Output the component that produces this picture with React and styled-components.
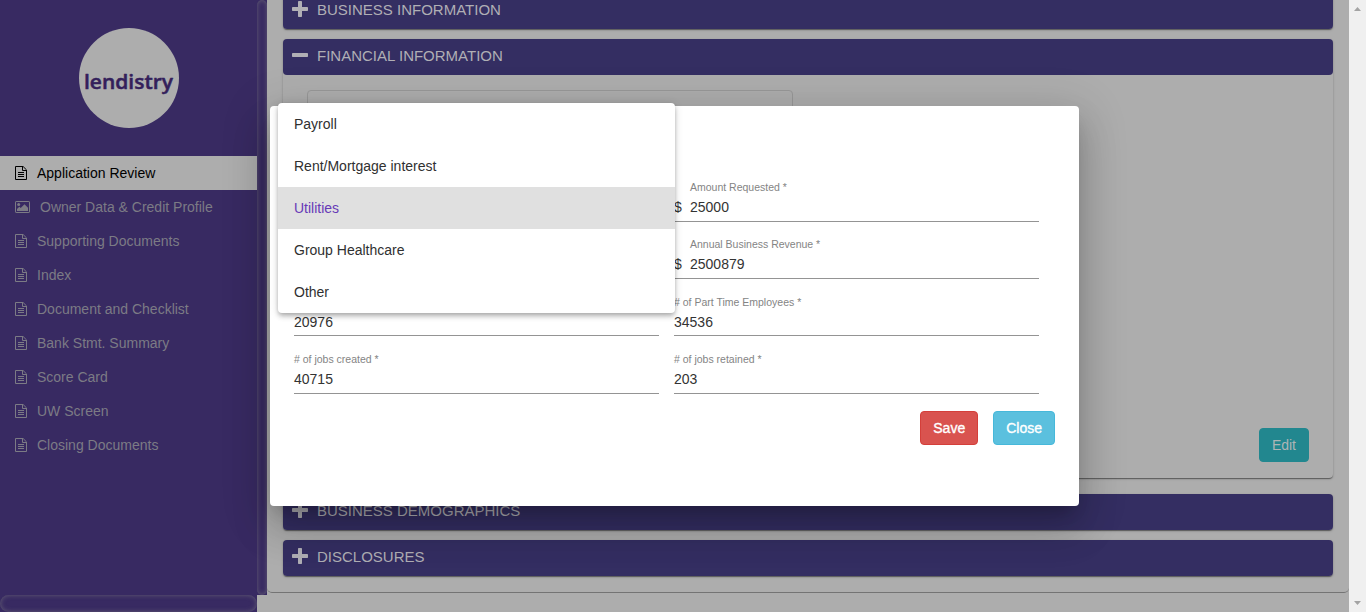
import React from "react";
import styled, { createGlobalStyle, css } from "styled-components";

const GlobalStyle = createGlobalStyle`
  * { box-sizing: border-box; }
  html, body { margin: 0; padding: 0; overflow: hidden; }
  body {
    font-family: "Liberation Sans", Arial, sans-serif;
    font-size: 14px;
    background: #adadad;
  }
`;

const Page = styled.div`
  position: relative;
  display: flex;
  width: 1366px;
  height: 612px;
  overflow: hidden;
`;

const SidebarArea = styled.aside`
  display: grid;
  grid-template-columns: 257px 10px;
  grid-template-rows: 595px 17px;
  width: 267px;
  flex: none;
`;

const Sidebar = styled.div`
  background: #382a62;
  display: flex;
  flex-direction: column;
  align-items: center;
  padding-top: 28px;
`;

const ScrollTrack = styled.div`
  background: #382a62;
  & > div {
    width: 100%;
    height: 100%;
    border-radius: 10px;
    box-shadow: inset 0 0 5px rgba(128, 128, 128, 0.6);
  }
`;

const Logo = styled.div`
  width: 100px;
  height: 100px;
  flex: none;
  border-radius: 50%;
  background: #adadad;
  margin-bottom: 28px;

  text {
    font-family: "Open Sans", Lato, sans-serif;
    font-size: 20px;
    font-weight: 600;
    fill: #341f5b;
    stroke: #341f5b;
    stroke-width: 0.5px;
    stroke-linejoin: round;
  }
`;

const Nav = styled.nav`
  width: 100%;
  display: flex;
  flex-direction: column;
`;

const NavItem = styled.a`
  height: 34px;
  display: flex;
  align-items: center;
  gap: 10px;
  padding-left: 15px;
  color: ${(p) => (p.$active ? "#000" : "#7c7b85")};
  background: ${(p) => (p.$active ? "#adadad" : "transparent")};
  svg { flex: none; display: block; }
`;

const Content = styled.main`
  flex: none;
  width: 1082px;
  height: 593px;
  display: flex;
  flex-direction: column;
  padding: 0 16px;
  overflow: hidden;
  border-bottom: 1px solid #747474;
  border-radius: 0 0 5px 5px;
`;

const Panel = styled.section`
  flex: none;
  height: ${(p) => p.$height || 36}px;
  margin: ${(p) => p.$margin || "0 0 10px"};
  border-radius: 4px;
  box-shadow: 0 2px 1px -1px rgba(0, 0, 0, 0.2), 0 1px 1px rgba(0, 0, 0, 0.25), 0 1px 3px rgba(0, 0, 0, 0.16);
`;

const PanelHeader = styled.header`
  height: 36px;
  border-radius: 4px;
  background: #342e62;
  color: #b0afb5;
  display: flex;
  align-items: center;
  gap: 9px;
  padding: 0 9px 4px;
  font-size: 15px;
  svg { flex: none; }
`;

const PanelBody = styled.div`
  height: 403px;
  padding: 15px 24px 16px;
  display: flex;
  flex-direction: column;
  justify-content: space-between;
`;

const Outline = styled.div`
  width: 486px;
  height: 60px;
  border: 1px solid #989898;
  border-radius: 4px;
`;

const Button = styled.button`
  height: 34px;
  padding: 0 12px;
  border: 1px solid ${(p) => p.$border};
  border-radius: 4px;
  background: ${(p) => p.$bg};
  color: ${(p) => p.$color || "#fff"};
  font: 14px "Liberation Sans", Arial, sans-serif;
  ${(p) =>
    p.$strong &&
    css`
      -webkit-text-stroke: 0.35px #fff;
    `}
  &:last-child { align-self: flex-end; }
`;

const PageScrollbar = styled.div`
  width: 17px;
  flex: none;
  background: #f0f0f0;
  display: flex;
  flex-direction: column;
  justify-content: space-between;
  align-items: center;
  padding: 7px 0 7px;
  svg { display: block; }
`;

const Dialog = styled.div`
  position: absolute;
  left: 270px;
  top: 106px;
  width: 809px;
  height: 400px;
  padding: 67px 24px 0;
  border-radius: 4px;
  background: #fff;
  box-shadow: 0 11px 15px -7px rgba(0, 0, 0, 0.2), 0 24px 38px 3px rgba(0, 0, 0, 0.14),
    0 9px 46px 8px rgba(0, 0, 0, 0.12);
`;

const FieldGrid = styled.div`
  display: grid;
  grid-template-columns: 365px 365px;
  grid-auto-rows: 57.33px;
  column-gap: 15px;
`;

const Field = styled.div`
  height: ${(p) => (p.$short ? 48 : 49)}px;
  display: flex;
  align-items: flex-end;
  border-bottom: 1px solid #949494;
`;

const Prefix = styled.span`
  width: 16px;
  line-height: 16px;
  padding-bottom: 6px;
  color: #333;
`;

const FieldText = styled.div`
  display: flex;
  flex-direction: column;
  height: 100%;
  padding-top: 8px;
  color: #333;
`;

const Label = styled.label`
  font-size: 10.5px;
  line-height: 12px;
  color: #848484;
`;

const Value = styled.span`
  margin-top: 6px;
  line-height: 16px;
`;

const Actions = styled.div`
  display: flex;
  justify-content: flex-end;
  gap: 15px;
  margin-top: 9px;
`;

const Menu = styled.ul`
  position: absolute;
  left: 278px;
  top: 103px;
  width: 397px;
  margin: 0;
  padding: 0;
  list-style: none;
  border-radius: 4px;
  overflow: hidden;
  background: #fff;
  box-shadow: 0 2px 4px -1px rgba(0, 0, 0, 0.2), 0 4px 5px rgba(0, 0, 0, 0.14),
    0 1px 10px rgba(0, 0, 0, 0.12);
`;

const MenuItem = styled.li`
  height: 42px;
  line-height: 42px;
  padding: 0 16px;
  color: ${(p) => (p.$selected ? "#673ab7" : "#303030")};
  background: ${(p) => (p.$selected ? "#e0e0e0" : "transparent")};
`;

const FileIcon = () => (
  <svg width="12" height="14" viewBox="0 0 12 14" fill="none" stroke="currentColor">
    <path d="M.5 .5h7.6l3.4 3.4v9.6h-11z" />
    <path d="M7.5 .5v4h4M3 6.5h6M3 8.5h6M3 10.5h6" />
  </svg>
);

const ImageIcon = () => (
  <svg width="15" height="12" viewBox="0 0 15 12">
    <rect x=".5" y=".5" width="14" height="11" rx=".6" fill="none" stroke="currentColor" />
    <circle cx="3.7" cy="3.6" r="1.5" fill="currentColor" />
    <path d="M2 10V8l2.3-2.3 1.4 1.4L9.5 3.3 13 6.8V10z" fill="currentColor" />
  </svg>
);

const ToggleIcon = ({ open }) => (
  <svg width="16" height="16" viewBox="0 0 16 16" fill="currentColor">
    <rect x="0" y="6" width="16" height="4" rx=".7" />
    {!open && <rect x="6" y="0" width="4" height="16" rx=".7" />}
  </svg>
);

const NAV = [
  "Application Review",
  "Owner Data & Credit Profile",
  "Supporting Documents",
  "Index",
  "Document and Checklist",
  "Bank Stmt. Summary",
  "Score Card",
  "UW Screen",
  "Closing Documents",
];

const FIELDS = [
  {},
  { label: "Amount Requested *", value: "25000", prefix: "$" },
  {},
  { label: "Annual Business Revenue *", value: "2500879", prefix: "$" },
  { label: "\u00a0", value: "20976", short: true },
  { label: "# of Part Time Employees *", value: "34536", short: true },
  { label: "# of jobs created *", value: "40715" },
  { label: "# of jobs retained *", value: "203" },
];

const OPTIONS = ["Payroll", "Rent/Mortgage interest", "Utilities", "Group Healthcare", "Other"];

const Accordion = ({ title, open, height, margin, children }) => (
  <Panel $height={height} $margin={margin}>
    <PanelHeader>
      <ToggleIcon open={open} />
      {title}
    </PanelHeader>
    {children}
  </Panel>
);

export default function App() {
  return (
    <Page>
      <GlobalStyle />
      <SidebarArea>
        <Sidebar>
          <Logo>
            <svg width="100" height="100" viewBox="0 0 100 100">
              <text x="5" y="61" textLength="89" lengthAdjust="spacingAndGlyphs">lendistry</text>
            </svg>
          </Logo>
          <Nav>
            {NAV.map((name, i) => (
              <NavItem key={name} $active={i === 0}>
                {i === 1 ? <ImageIcon /> : <FileIcon />}
                {name}
              </NavItem>
            ))}
          </Nav>
        </Sidebar>
        <ScrollTrack><div /></ScrollTrack>
        <ScrollTrack><div /></ScrollTrack>
      </SidebarArea>

      <Content>
        <Accordion title="BUSINESS INFORMATION" margin="-7px 0 10px" />
        <Accordion title="FINANCIAL INFORMATION" open height={439} margin="0 0 16px">
          <PanelBody>
            <Outline />
            <Button $bg="#22878f" $border="#22878f" $color="#adb5b6">Edit</Button>
          </PanelBody>
        </Accordion>
        <Accordion title="BUSINESS DEMOGRAPHICS" />
        <Accordion title="DISCLOSURES" />
      </Content>

      <PageScrollbar>
        <svg width="7" height="4"><path d="M3.5 0L7 4H0z" fill="#a3a3a3" /></svg>
        <svg width="7" height="4"><path d="M0 0h7L3.5 4z" fill="#a3a3a3" /></svg>
      </PageScrollbar>

      <Dialog>
        <FieldGrid>
          {FIELDS.map((f, i) => (
            <Field key={i} $short={f.short}>
              {f.prefix && <Prefix>{f.prefix}</Prefix>}
              <FieldText>
                <Label>{f.label}</Label>
                <Value>{f.value}</Value>
              </FieldText>
            </Field>
          ))}
        </FieldGrid>
        <Actions>
          <Button $strong $bg="#d9534f" $border="#d43f3a">Save</Button>
          <Button $strong $bg="#5bc0de" $border="#46b8da">Close</Button>
        </Actions>
      </Dialog>

      <Menu>
        {OPTIONS.map((o) => (
          <MenuItem key={o} $selected={o === "Utilities"}>{o}</MenuItem>
        ))}
      </Menu>
    </Page>
  );
}
